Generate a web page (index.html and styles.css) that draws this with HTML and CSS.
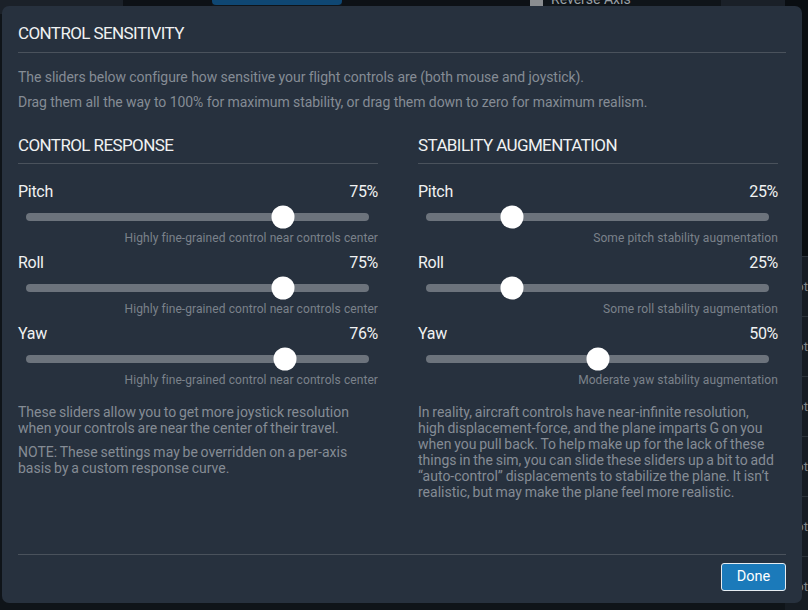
FILE: index.html
```html
<!DOCTYPE html>
<html>
<head>
<meta charset="utf-8">
<title>Control Sensitivity</title>
<link rel="stylesheet" href="styles.css">
</head>
<body>
<div class="backdrop">
  <div class="bg-main">
    <div class="topstrip">
      <div class="ts-a"></div>
      <div class="ts-b"></div>
      <div class="ts-tab"></div>
      <div class="ts-gap"></div>
      <div class="ts-check"></div>
      <span class="ts-label">Reverse Axis</span>
      <div class="ts-bar"></div>
    </div>
  </div>
  <div class="bg-side">
    <div class="side-row dark"></div>
    <div class="side-row">Rot</div>
    <div class="side-row">Rot</div>
    <div class="side-row">Rot</div>
    <div class="side-row">Rot</div>
    <div class="side-row">Rot</div>
    <div class="side-row">Rot</div>
  </div>
</div>

<div class="dialog">
  <div class="dialog-body">
    <h1 class="title">CONTROL SENSITIVITY</h1>
    <p class="intro">The sliders below configure how sensitive your flight controls are (both mouse and joystick).</p>
    <p class="intro second">Drag them all the way to 100% for maximum stability, or drag them down to zero for maximum realism.</p>

    <div class="columns">
      <section class="col">
        <h2 class="col-title">CONTROL RESPONSE</h2>
        <div class="row">
          <div class="row-head"><span>Pitch</span><span>75%</span></div>
          <div class="slider"><div class="track"><div class="thumb" style="left:75%"></div></div></div>
          <div class="caption">Highly fine-grained control near controls center</div>
        </div>
        <div class="row">
          <div class="row-head"><span>Roll</span><span>75%</span></div>
          <div class="slider"><div class="track"><div class="thumb" style="left:75%"></div></div></div>
          <div class="caption">Highly fine-grained control near controls center</div>
        </div>
        <div class="row">
          <div class="row-head"><span>Yaw</span><span>76%</span></div>
          <div class="slider"><div class="track"><div class="thumb" style="left:75.6%"></div></div></div>
          <div class="caption">Highly fine-grained control near controls center</div>
        </div>
        <p class="note">These sliders allow you to get more joystick resolution when your controls are near the center of their travel.</p>
        <p class="note">NOTE: These settings may be overridden on a per-axis basis by a custom response curve.</p>
      </section>

      <section class="col">
        <h2 class="col-title">STABILITY AUGMENTATION</h2>
        <div class="row">
          <div class="row-head"><span>Pitch</span><span>25%</span></div>
          <div class="slider"><div class="track"><div class="thumb" style="left:25%"></div></div></div>
          <div class="caption">Some pitch stability augmentation</div>
        </div>
        <div class="row">
          <div class="row-head"><span>Roll</span><span>25%</span></div>
          <div class="slider"><div class="track"><div class="thumb" style="left:25%"></div></div></div>
          <div class="caption">Some roll stability augmentation</div>
        </div>
        <div class="row">
          <div class="row-head"><span>Yaw</span><span>50%</span></div>
          <div class="slider"><div class="track"><div class="thumb" style="left:50%"></div></div></div>
          <div class="caption">Moderate yaw stability augmentation</div>
        </div>
        <p class="note">In reality, aircraft controls have near-infinite resolution, high displacement-force, and the plane imparts G on you when you pull back. To help make up for the lack of these things in the sim, you can slide these sliders up a bit to add “auto-control” displacements to stabilize the plane. It isn’t realistic, but may make the plane feel more realistic.</p>
      </section>
    </div>
  </div>
  <div class="dialog-footer">
    <button class="btn-done">Done</button>
  </div>
</div>
</body>
</html>
```

FILE: styles.css
```css
* { box-sizing: border-box; }

body {
  margin: 0;
  width: 808px;
  height: 610px;
  overflow: hidden;
  position: relative;
  background: #0f1419;
  font-family: Roboto, "Noto Sans", sans-serif;
}

/* ---------- backdrop (page behind the modal) ---------- */
.backdrop {
  display: flex;
  height: 610px;
}
.bg-main {
  width: 790px;
}
.topstrip {
  display: flex;
  align-items: flex-start;
  height: 14px;
  overflow: hidden;
}
.ts-a { width: 123px; height: 14px; background: #1b2129; flex: none; }
.ts-b { width: 89px; height: 14px; background: #0d1116; flex: none; }
.ts-tab { width: 130px; height: 5px; background: #0f4773; border-radius: 0 0 4px 4px; flex: none; }
.ts-gap { width: 188px; height: 14px; background: #0d1116; flex: none; }
.ts-check { width: 13px; height: 14px; background: #8a8d90; margin: -6px 0 0 0; flex: none; }
.ts-label {
  margin: -8px 0 0 8px;
  color: #9aa0a6;
  font-size: 14px;
  line-height: 14px;
  white-space: nowrap;
  flex: none;
}
.ts-bar {
  margin-left: 90px;
  flex: 1;
  height: 14px;
  background: #1a2028;
}
.bg-side {
  flex: 1;
  background: #161c23;
}
.side-row {
  height: 60px;
  border-bottom: 1px solid #2c333b;
  color: #80868d;
  font-size: 13px;
  line-height: 60px;
  padding-left: 3px;
  white-space: nowrap;
}
.side-row.dark {
  height: 257px;
  background: #0a0e12;
}

/* ---------- dialog ---------- */
.dialog {
  position: absolute;
  left: 2px;
  top: 6px;
  width: 800px;
  height: 597px;
  padding: 0 16px 12px;
  background: #27313e;
  border-radius: 7px;
  display: flex;
  flex-direction: column;
}
.dialog-body {
  flex: 1;
}
.title {
  margin: 0;
  padding: 17px 0 9px;
  font-size: 17px;
  line-height: 20px;
  font-weight: 400;
  color: #f0f1f2;
  letter-spacing: -0.6px;
  border-bottom: 1px solid #4a525c;
}
.intro {
  margin: 14px 0 0;
  font-size: 14px;
  line-height: 20px;
  color: #858c95;
  letter-spacing: -0.06px;
}
.intro.second {
  margin-top: 5px;
}

.columns {
  display: grid;
  grid-template-columns: 360px 360px;
  column-gap: 40px;
  margin-top: 23px;
}
.col-title {
  margin: 0;
  padding: 0 0 8px;
  font-size: 17px;
  line-height: 20px;
  font-weight: 400;
  color: #f0f1f2;
  letter-spacing: -0.6px;
  border-bottom: 1px solid #4a525c;
}
.row {
  padding-bottom: 8px;
}
.col-title + .row {
  margin-top: 18px;
}
.row-head {
  display: flex;
  justify-content: space-between;
  font-size: 16px;
  line-height: 20px;
  color: #f0f1f2;
  letter-spacing: -0.3px;
}
.slider {
  height: 24px;
  margin: 3px 9px 0 8px;
  display: flex;
  align-items: center;
}
.track {
  position: relative;
  width: 100%;
  height: 8px;
  border-radius: 4px;
  background: #6c737c;
}
.thumb {
  position: absolute;
  top: 50%;
  width: 23px;
  height: 23px;
  border-radius: 50%;
  background: #ffffff;
  transform: translate(-50%, -50%);
}
.caption {
  margin-top: 2px;
  text-align: right;
  font-size: 12px;
  line-height: 14px;
  color: #7b828b;
  letter-spacing: 0.08px;
}
.note {
  margin: 9px 0 0;
  font-size: 14px;
  line-height: 16px;
  color: #858c95;
  word-spacing: -0.7px;
}
.note + .note {
  margin-top: 8px;
}

/* ---------- footer ---------- */
.dialog-footer {
  border-top: 1px solid #4a525c;
  padding-top: 8px;
  display: flex;
  justify-content: flex-end;
}
.btn-done {
  width: 65px;
  height: 28px;
  padding: 0;
  background: #1b7aba;
  border: 1px solid #e6ecf1;
  border-radius: 3px;
  color: #ffffff;
  font-family: Roboto, "Noto Sans", sans-serif;
  font-size: 14.5px;
  line-height: 26px;
}
```
